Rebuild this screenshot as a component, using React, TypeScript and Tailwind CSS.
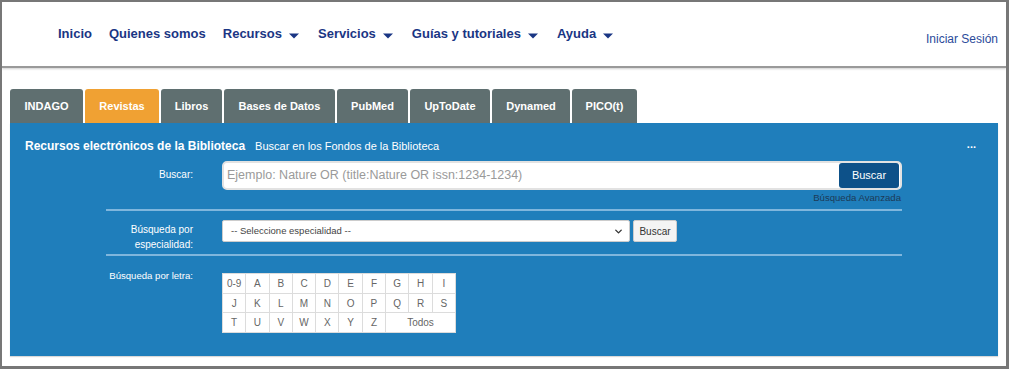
import { ChevronDown } from 'lucide-react';

const navItems = [
    { label: 'Inicio', caret: false },
    { label: 'Quienes somos', caret: false },
    { label: 'Recursos', caret: true },
    { label: 'Servicios', caret: true },
    { label: 'Guías y tutoriales', caret: true },
    { label: 'Ayuda', caret: true },
];

const tabs = [
    { label: 'INDAGO', w: 'w-[73px]' },
    { label: 'Revistas', w: 'w-[74px]' },
    { label: 'Libros', w: 'w-[61px]' },
    { label: 'Bases de Datos', w: 'w-[111px]' },
    { label: 'PubMed', w: 'w-[71px]' },
    { label: 'UpToDate', w: 'w-[80px]' },
    { label: 'Dynamed', w: 'w-[78px]' },
    { label: 'PICO(t)', w: 'w-[65px]' },
];

const letterRows = [
    ['0-9', 'A', 'B', 'C', 'D', 'E', 'F', 'G', 'H', 'I'],
    ['J', 'K', 'L', 'M', 'N', 'O', 'P', 'Q', 'R', 'S'],
    ['T', 'U', 'V', 'W', 'X', 'Y', 'Z'],
];

function Caret() {
    return (
        <svg width="10" height="6" viewBox="0 0 10 6" className="ml-[7px] mr-[2px] mt-[3px]">
            <path d="M0 0.5 L10 0.5 L5 5.5 Z" fill="#1a3684" />
        </svg>
    );
}

export default function App() {
    return (
        <div className="w-[1009px] h-[369px] bg-white border-l-2 border-t-2 border-r-[3px] border-b-[3px] border-[#777] font-['Liberation_Sans',Arial,sans-serif] overflow-hidden">
            {/* Top navigation */}
            <header className="h-[66px] flex items-center justify-between pl-[56px] pr-[8px] border-b-2 border-[#9a9a9a] shadow-[0_1px_2px_#cfcfcf]">
                <nav className="flex items-center gap-[17px]">
                    {navItems.map((item) => (
                        <a key={item.label} className="flex items-center text-[13px] font-bold text-[#1a3684]">
                            {item.label}
                            {item.caret && <Caret />}
                        </a>
                    ))}
                </nav>
                <a className="text-[12px] text-[#2b4a9a] mt-[10px]">Iniciar Sesión</a>
            </header>

            <div className="px-2 pt-[21px]">
                {/* Tabs */}
                <div className="flex gap-[2px] h-[34px]">
                    {tabs.map((tab) => (
                        <div
                            key={tab.label}
                            className={`${tab.w} flex items-center justify-center rounded-t-[3px] text-white text-[11px] font-bold ${
                                tab.label === 'Revistas' ? 'bg-[#f0a133]' : 'bg-[#5f6f70]'
                            }`}
                        >
                            {tab.label}
                        </div>
                    ))}
                </div>

                {/* Search panel */}
                <section className="h-[233px] bg-[#1f7ebb] pl-[15px] pr-[22px] pt-[15px] shadow-[0_1px_1px_rgba(0,0,0,0.15)]">
                    <div className="flex items-center justify-between h-[16px]">
                        <div className="flex items-baseline gap-[10px] text-white">
                            <h2 className="text-[12px] font-bold">Recursos electrónicos de la Biblioteca</h2>
                            <span className="text-[11px]">Buscar en los Fondos de la Biblioteca</span>
                        </div>
                        <span className="text-white text-[11px] font-bold leading-none -mt-[4px]">...</span>
                    </div>

                    <div className="ml-[81px] w-[796px] mt-[7px]">
                        {/* Free text search */}
                        <div className="flex">
                            <label className="w-[87px] text-right text-[10px] text-white pt-[6px]">Buscar:</label>
                            <div className="ml-[29px] flex-1">
                                <div className="h-[29px] flex items-center bg-white border-2 border-[#e2e2e2] rounded-[5px] pl-[3px] pr-[1px]">
                                    <input
                                        className="flex-1 outline-none text-[12.5px] text-[#555] placeholder:text-[#9a9a9a] bg-transparent"
                                        placeholder="Ejemplo: Nature OR (title:Nature OR issn:1234-1234)"
                                    />
                                    <button className="h-[25px] w-[60px] rounded-[3px] bg-[#0d5189] text-white text-[11px]">Buscar</button>
                                </div>
                                <div className="text-right text-[9.6px] text-[#1d3a57] mt-[1px] pr-[1px]">Búsqueda Avanzada</div>
                            </div>
                        </div>

                        <div className="h-[2px] bg-[#7fb6dd] mt-[4px]" />

                        {/* Speciality search */}
                        <div className="flex mt-[9px] h-[34px]">
                            <label className="w-[87px] text-right text-[10px] leading-[15px] text-white pt-[2px] pl-[20px]">
                                Búsqueda por especialidad:
                            </label>
                            <div className="ml-[29px] flex gap-[3px] items-start">
                                <div className="w-[408px] h-[22px] bg-white border border-[#ccc] rounded-[2px] flex items-center justify-between pl-[8px] pr-[5px]">
                                    <span className="text-[9.5px] text-[#444]">-- Seleccione especialidad --</span>
                                    <ChevronDown className="size-[11px] text-[#333]" strokeWidth={3} />
                                </div>
                                <button className="w-[44px] h-[22px] bg-[#f4f4f4] border border-[#ccc] rounded-[2px] text-[10px] text-[#333]">Buscar</button>
                            </div>
                        </div>

                        <div className="h-[2px] bg-[#7fb6dd]" />

                        {/* Letter search */}
                        <div className="flex mt-[17px]">
                            <label className="w-[87px] flex justify-end whitespace-nowrap text-[9.6px] text-white -mt-[4px]">
                                Búsqueda por letra:
                            </label>
                            <table className="ml-[29px] w-[234px] table-fixed border-collapse bg-white">
                                <tbody>
                                    {letterRows.map((row, i) => (
                                        <tr key={i} className="h-[19.5px]">
                                            {row.map((l) => (
                                                <td key={l} className="border border-[#dcdcdc] text-center text-[10px] text-[#666] p-0">
                                                    {l}
                                                </td>
                                            ))}
                                            {i === 2 && (
                                                <td colSpan={3} className="border border-[#dcdcdc] text-center text-[10px] text-[#666] p-0">
                                                    Todos
                                                </td>
                                            )}
                                        </tr>
                                    ))}
                                </tbody>
                            </table>
                        </div>
                    </div>
                </section>
            </div>
        </div>
    );
}
